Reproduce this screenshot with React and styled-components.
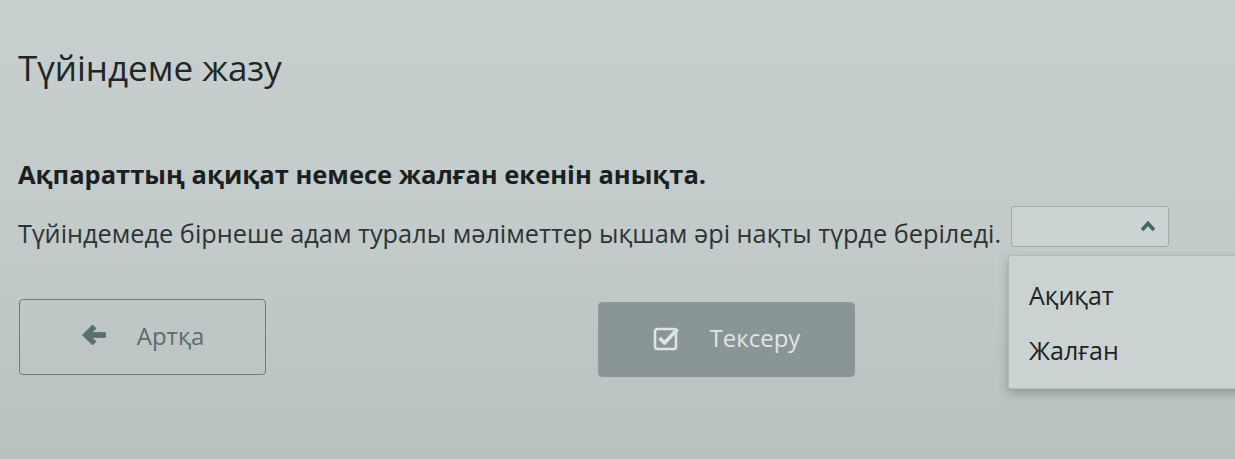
import React from "react";
import styled, { createGlobalStyle } from "styled-components";

const GlobalStyle = createGlobalStyle`
  html, body {
    margin: 0;
    padding: 0;
  }
  body {
    width: 1235px;
    height: 459px;
    overflow: hidden;
    font-family: "Open Sans", "Noto Sans", sans-serif;
    background: linear-gradient(180deg, #c7cfcf 0%, #c2caca 55%, #b7c1bf 100%);
  }
`;

const Page = styled.div`
  padding: 44px 0 0 18px;
  color: #1d2323;
`;

const Title = styled.h1`
  margin: 0;
  font-size: 35px;
  font-weight: 400;
  line-height: 48px;
  color: #202626;
`;

const Instruction = styled.p`
  margin: 66px 0 0;
  font-size: 25.5px;
  font-weight: 700;
  line-height: 32px;
  color: #1a1f1f;
`;

const Statement = styled.div`
  margin-top: 26px;
  display: flex;
  align-items: center;
  gap: 10px;
  font-size: 25.3px;
  line-height: 34px;
  color: #2d3434;
`;

const SelectWrap = styled.div`
  position: relative;
`;

const SelectBox = styled.div`
  width: 158px;
  height: 41px;
  border: 1px solid #a2abab;
  border-radius: 3px;
  background: #ccd3d3;
  display: flex;
  align-items: center;
  justify-content: flex-end;
  padding-right: 12px;
  box-sizing: border-box;
  margin-top: -14px;
`;

const Menu = styled.ul`
  position: absolute;
  top: 35px;
  left: -3px;
  width: 262px;
  margin: 0;
  padding: 15px 0 7px;
  list-style: none;
  background: #cad2d2;
  border: 1px solid #b3bcbc;
  border-radius: 3px;
  box-shadow: 0 4px 10px rgba(60, 70, 70, 0.35);
`;

const Option = styled.li`
  padding: 6px 20px 13px;
  font-size: 25px;
  line-height: 36px;
  color: #1e2424;
`;

const Actions = styled.div`
  margin-top: 49px;
  display: flex;
  align-items: flex-start;
  gap: 332px;
  padding-left: 1px;
`;

const Button = styled.div`
  width: ${(p) => p.$w}px;
  height: ${(p) => p.$h}px;
  margin-top: ${(p) => p.$top || 0}px;
  box-sizing: border-box;
  border-radius: 4px;
  display: flex;
  align-items: center;
  justify-content: center;
  gap: 30px;
  font-size: 24px;
  padding-bottom: 4px;
  border: ${(p) => (p.$primary ? "1px solid #8d9898" : "1px solid #6f7a7a")};
  background: ${(p) => (p.$primary ? "#8a9595" : "transparent")};
  color: ${(p) => (p.$primary ? "#dfe6e6" : "#5f6b6b")};
`;

const ArrowLeft = () => (
  <svg width="26" height="22" viewBox="0 0 26 22">
    <path
      d="M11.5 1 L1.5 11 L11.5 21 L15 17.5 L10.5 13.3 H24.5 V8.7 H10.5 L15 4.5 Z"
      fill="#5a6e6e"
      stroke="#5a6e6e"
      strokeWidth="1"
      strokeLinejoin="round"
    />
  </svg>
);

const CheckSquare = () => (
  <svg width="27" height="26" viewBox="0 0 27 26" fill="none">
    <rect x="2" y="4" width="21" height="20" rx="2.5" stroke="#dde4e4" strokeWidth="2.6" />
    <path d="M6.5 13 L11.5 18 L24.5 4" stroke="#dde4e4" strokeWidth="3.6" strokeLinejoin="round" />
  </svg>
);

const ChevronUp = () => (
  <svg width="16" height="12" viewBox="0 0 16 12">
    <path d="M2 10 L8 3.5 L14 10" fill="none" stroke="#3f6866" strokeWidth="3.6" />
  </svg>
);

export default function App() {
  return (
    <>
      <GlobalStyle />
      <Page>
        <Title>Түйіндеме жазу</Title>
        <Instruction>Ақпараттың ақиқат немесе жалған екенін анықта.</Instruction>
        <Statement>
          <span>Түйіндемеде бірнеше адам туралы мәліметтер ықшам әрі нақты түрде беріледі.</span>
          <SelectWrap>
            <SelectBox>
              <ChevronUp />
            </SelectBox>
            <Menu>
              <Option>Ақиқат</Option>
              <Option>Жалған</Option>
            </Menu>
          </SelectWrap>
        </Statement>
        <Actions>
          <Button $w={247} $h={76}>
            <ArrowLeft />
            <span>Артқа</span>
          </Button>
          <Button $primary $w={257} $h={75} $top={3}>
            <CheckSquare />
            <span>Тексеру</span>
          </Button>
        </Actions>
      </Page>
    </>
  );
}
